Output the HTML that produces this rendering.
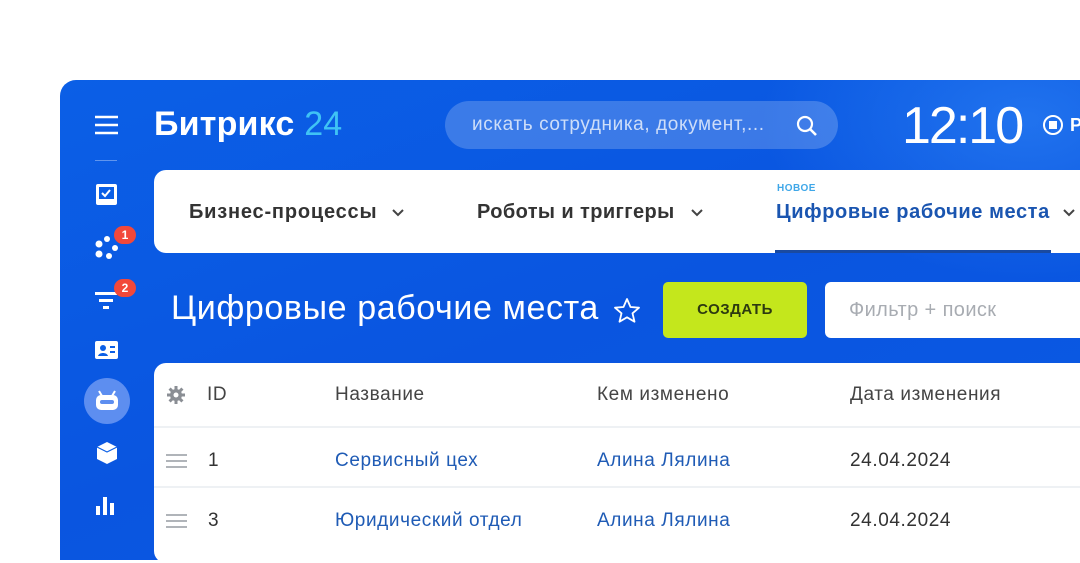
<!DOCTYPE html>
<html><head><meta charset="utf-8"><style>
*{margin:0;padding:0;box-sizing:border-box}
body{width:1080px;height:540px;background:#fff;overflow:hidden;position:relative;font-family:"Liberation Sans","Noto Sans CJK SC",sans-serif}
.panel{position:absolute;left:60px;top:80px;width:1040px;height:480px;border-radius:16px 0 0 0;background:linear-gradient(160deg,#0b5fe6 0%,#0a55e0 50%,#0a5ae4 100%)}
.glow{position:absolute;left:700px;top:0;width:380px;height:200px;background:radial-gradient(ellipse at 70% 20%,rgba(60,150,255,.45),rgba(60,150,255,0) 70%)}
.abs{position:absolute}
.w{color:#fff}
.badge{position:absolute;width:22px;height:18px;border-radius:9px;background:#f2483a;color:#fff;font-size:12px;font-weight:bold;text-align:center;line-height:18px}
.th{position:absolute;top:384px;font-size:19px;color:#444;letter-spacing:.6px}
.td{position:absolute;font-size:19px;color:#333;letter-spacing:.6px}
.lk{color:#1f5bb5}
.tab{position:absolute;top:201px;font-size:20px;color:#333;font-weight:bold}
</style></head><body>
<div class="panel"><div class="glow"></div></div>
<svg class="abs" style="left:94px;top:114px" width="26" height="22"><g stroke="#fff" stroke-width="2.6"><line x1="1" y1="3" x2="24" y2="3"/><line x1="1" y1="11" x2="24" y2="11"/><line x1="1" y1="19" x2="24" y2="19"/></g></svg>
<div class="abs" style="left:95px;top:160px;width:22px;height:1px;background:rgba(255,255,255,.35)"></div>
<svg class="abs" style="left:95px;top:183px" width="23" height="23"><rect x="1" y="1" width="21" height="21" rx="2" fill="#fff"/><rect x="4" y="4" width="15" height="12" fill="#0b5fe6"/><path d="M7 10l3 3 5-6" stroke="#fff" stroke-width="2" fill="none"/></svg>
<svg class="abs" style="left:94px;top:234px" width="26" height="26"><g fill="#fff"><circle cx="5" cy="10" r="3.5"/><circle cx="13" cy="5" r="3"/><circle cx="5" cy="20" r="3.5"/><circle cx="15" cy="22" r="3"/><circle cx="21" cy="14" r="3"/></g></svg>
<div class="badge" style="left:114px;top:226px">1</div>
<svg class="abs" style="left:95px;top:290px" width="24" height="22"><g fill="#fff"><rect x="0" y="2" width="22" height="3"/><rect x="4" y="9" width="14" height="3"/><rect x="8" y="16" width="6" height="3"/></g></svg>
<div class="badge" style="left:114px;top:279px">2</div>
<svg class="abs" style="left:95px;top:341px" width="24" height="19"><rect x="0" y="0" width="23" height="18" rx="2" fill="#fff"/><circle cx="8" cy="7" r="3" fill="#0b5fe6"/><path d="M3 15c1-4 9-4 10 0z" fill="#0b5fe6"/><rect x="15" y="5" width="5" height="2" fill="#0b5fe6"/><rect x="15" y="10" width="5" height="2" fill="#0b5fe6"/></svg>
<div class="abs" style="left:84px;top:378px;width:46px;height:46px;border-radius:50%;background:#5d8ef0"></div>
<svg class="abs" style="left:94px;top:388px" width="26" height="26"><path d="M5 3l3 5M21 3l-3 5" stroke="#fff" stroke-width="2"/><rect x="2" y="7" width="22" height="15" rx="5" fill="#fff"/><rect x="6" y="12" width="14" height="4" rx="2" fill="#5d8ef0"/></svg>
<svg class="abs" style="left:96px;top:441px" width="22" height="24"><path d="M11 1l10 5v12l-10 5-10-5V6z" fill="#fff"/><path d="M1 6l10 5 10-5" stroke="#0b5fe6" stroke-width="1.2" fill="none"/></svg>
<svg class="abs" style="left:96px;top:494px" width="22" height="22"><g fill="#fff"><rect x="0" y="12" width="4" height="9"/><rect x="7" y="3" width="4" height="18"/><rect x="14" y="9" width="4" height="12"/></g></svg>
<div class="abs w" style="left:154px;top:105px;font-size:34px;font-weight:bold;letter-spacing:0.2px">Битрикс <span style="color:#3fc3f5;font-weight:normal">24</span></div>
<div class="abs" style="left:445px;top:101px;width:393px;height:48px;border-radius:24px;background:rgba(255,255,255,.2)"></div>
<div class="abs" style="left:472px;top:114px;font-size:19px;color:rgba(255,255,255,.75);letter-spacing:.6px">искать сотрудника, документ,...</div>
<svg class="abs" style="left:795px;top:114px" width="24" height="24"><circle cx="10" cy="10" r="7" stroke="#fff" stroke-width="2.2" fill="none"/><line x1="15" y1="15" x2="21" y2="21" stroke="#fff" stroke-width="2.6"/></svg>
<div class="abs w" style="left:902px;top:96px;font-size:52px;font-weight:300;letter-spacing:-2px">12:10</div>
<svg class="abs" style="left:1042px;top:114px" width="22" height="22"><circle cx="11" cy="11" r="9" stroke="#fff" stroke-width="2" fill="none"/><rect x="7" y="7" width="8" height="8" fill="#fff"/></svg>
<div class="abs w" style="left:1070px;top:115px;font-size:18px;font-weight:bold">Р</div>
<div class="abs" style="left:154px;top:170px;width:940px;height:83px;border-radius:12px;background:#fff"></div>
<div class="tab" style="left:189px;letter-spacing:.8px">Бизнес-процессы</div>
<svg class="abs" style="left:391px;top:208px" width="14" height="10"><path d="M2 2l5 5 5-5" stroke="#444" stroke-width="2" fill="none"/></svg>
<div class="tab" style="left:477px;letter-spacing:.4px">Роботы и триггеры</div>
<svg class="abs" style="left:690px;top:208px" width="14" height="10"><path d="M2 2l5 5 5-5" stroke="#444" stroke-width="2" fill="none"/></svg>
<div class="abs" style="left:777px;top:183px;font-size:10px;color:#3fa7e8;font-weight:bold;letter-spacing:.5px">НОВОЕ</div>
<div class="tab" style="left:776px;color:#1a55b0;letter-spacing:.6px">Цифровые рабочие места</div>
<svg class="abs" style="left:1062px;top:208px" width="14" height="10"><path d="M2 2l5 5 5-5" stroke="#444" stroke-width="2" fill="none"/></svg>
<div class="abs" style="left:775px;top:250px;width:276px;height:3px;background:#1a4aa0"></div>
<div class="abs w" style="left:171px;top:289px;font-size:34px;font-weight:300;letter-spacing:0.6px">Цифровые рабочие места</div>
<svg class="abs" style="left:613px;top:297px" width="28" height="28"><path d="M14 2l3.5 8 8.5.7-6.5 5.6 2 8.4L14 20.3 6.5 24.7l2-8.4L2 10.7l8.5-.7z" stroke="#fff" stroke-width="1.8" fill="none" stroke-linejoin="round"/></svg>
<div class="abs" style="left:663px;top:282px;width:144px;height:56px;border-radius:5px;background:#c4e71c;text-align:center;line-height:56px;font-size:15px;font-weight:bold;color:#2d3a10;letter-spacing:.5px">СОЗДАТЬ</div>
<div class="abs" style="left:825px;top:282px;width:280px;height:56px;border-radius:6px;background:#fff"></div>
<div class="abs" style="left:849px;top:299px;font-size:20px;color:#a8acb2;letter-spacing:.4px">Фильтр + поиск</div>
<div class="abs" style="left:154px;top:363px;width:940px;height:200px;border-radius:12px;background:#fff"></div>
<div class="abs" style="left:154px;top:426px;width:940px;height:2px;background:#eef1f4"></div>
<div class="abs" style="left:154px;top:486px;width:940px;height:2px;background:#eef1f4"></div>
<svg class="abs" style="left:166px;top:385px" width="20" height="20"><g fill="#8a8e94"><circle cx="10" cy="10" r="6"/><g stroke="#8a8e94" stroke-width="3"><line x1="10" y1="1" x2="10" y2="19"/><line x1="1" y1="10" x2="19" y2="10"/><line x1="3.6" y1="3.6" x2="16.4" y2="16.4"/><line x1="16.4" y1="3.6" x2="3.6" y2="16.4"/></g></g><circle cx="10" cy="10" r="2.5" fill="#fff"/></svg>
<div class="th" style="left:207px">ID</div>
<div class="th" style="left:335px">Название</div>
<div class="th" style="left:597px">Кем изменено</div>
<div class="th" style="left:850px">Дата изменения</div>
<svg class="abs" style="left:166px;top:453px" width="22" height="16"><g stroke="#b0b4b9" stroke-width="2"><line x1="0" y1="2" x2="21" y2="2"/><line x1="0" y1="8" x2="21" y2="8"/><line x1="0" y1="14" x2="21" y2="14"/></g></svg>
<div class="td" style="left:208px;top:450px">1</div>
<div class="td lk" style="left:335px;top:450px">Сервисный цех</div>
<div class="td lk" style="left:597px;top:450px">Алина Лялина</div>
<div class="td" style="left:850px;top:450px">24.04.2024</div>
<svg class="abs" style="left:166px;top:513px" width="22" height="16"><g stroke="#b0b4b9" stroke-width="2"><line x1="0" y1="2" x2="21" y2="2"/><line x1="0" y1="8" x2="21" y2="8"/><line x1="0" y1="14" x2="21" y2="14"/></g></svg>
<div class="td" style="left:208px;top:510px">3</div>
<div class="td lk" style="left:335px;top:510px">Юридический отдел</div>
<div class="td lk" style="left:597px;top:510px">Алина Лялина</div>
<div class="td" style="left:850px;top:510px">24.04.2024</div>
</body></html>
